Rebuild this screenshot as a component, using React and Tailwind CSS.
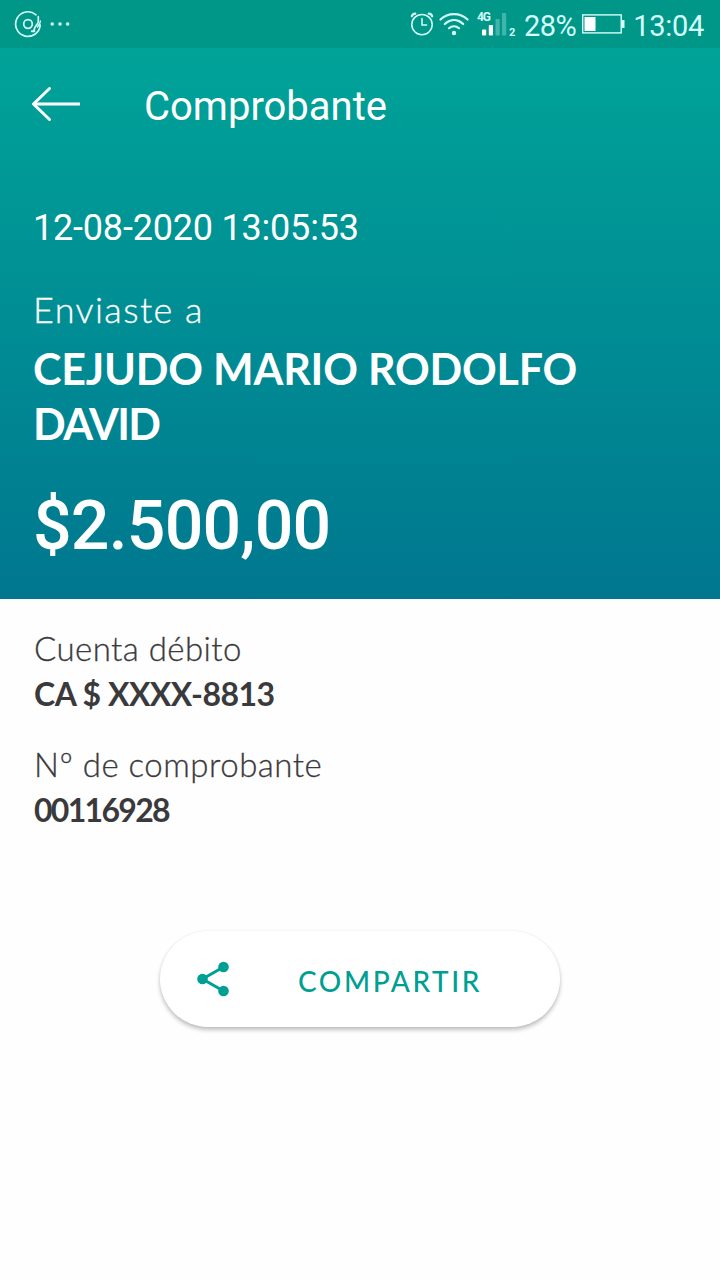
import React from 'react';

const DETAILS = [
  { label: 'Cuenta débito', value: 'CA $ XXXX-8813', labelClass: 'tracking-[0.45px]', valueClass: 'tracking-[-0.5px]' },
  { label: 'Nº de comprobante', value: '00116928', labelClass: 'tracking-[0.5px]', valueClass: 'tracking-[-1.7px]' },
];

function StatusBar() {
  return (
    <div className="flex h-12 items-center justify-between bg-[#009688] text-[#d4fffa]">
      <div className="flex items-center pl-[14px]">
        <svg width="28" height="28" viewBox="0 0 28 28" fill="none" stroke="currentColor" strokeWidth="1.7" strokeLinecap="round">
          <path d="M22 4.8A12.3 12.3 0 1 0 26.2 15" />
          <circle cx="14" cy="14" r="4.3" />
          <path d="M24.3 6.5v5c0 3-4 4-4.500 9.300" />
          <path d="M26.4 11c0 2.500-1.400 4-3 6" strokeWidth="1.3" />
          <path d="M17.8 21.300h2.500" strokeWidth="2" />
        </svg>
        <svg className="ml-2" width="20" height="4" viewBox="0 0 20 4" fill="currentColor">
          <circle cx="2.2" cy="2" r="1.8" />
          <circle cx="10" cy="2" r="1.8" />
          <circle cx="17.7" cy="2" r="1.8" />
        </svg>
      </div>
      <div className="flex items-center pr-4 font-[Roboto,sans-serif] text-[29px] leading-none">
        <svg width="24" height="24" viewBox="0 0 24 24" fill="none" stroke="currentColor" strokeWidth="1.5" strokeLinecap="round">
          <circle cx="12" cy="12.6" r="10.2" />
          <path d="M12 6.5V13h4.600" />
          <path d="M1.800 4.300Q2.500 1.800 5.300 1.600M22.200 4.300Q21.500 1.800 18.700 1.600" strokeWidth="2.2" />
        </svg>
        <svg className="ml-[5px]" width="30" height="24" viewBox="0 0 30 24" fill="none" stroke="currentColor" strokeWidth="2.2" strokeLinecap="round">
          <path d="M1.500 7.500C9 .3 21 .3 28.500 7.500" />
          <path d="M5.800 12C11.500 6.800 18.500 6.800 24.200 12" />
          <path d="M10 16.300c3-2.700 7-2.700 10 0" />
          <circle cx="15" cy="21" r="2.200" fill="currentColor" stroke="none" />
        </svg>
        <svg className="ml-2" width="39" height="26" viewBox="0 0 39 26" fill="currentColor">
          <text x="0" y="10" fontSize="12" fontWeight="700" fontFamily="Roboto, sans-serif" textLength="14">4G</text>
          <rect x="5" y="18.500" width="4.200" height="6" rx=".8" fill="#fff" />
          <rect x="11.800" y="14" width="4.200" height="10.500" rx=".8" fill="#fff" />
          <rect x="18.500" y="8" width="4.200" height="16.500" rx=".8" opacity=".3" />
          <rect x="25" y="2" width="4.200" height="22.500" rx=".8" opacity=".3" />
          <text x="32" y="24.500" fontSize="11" fontWeight="700" fontFamily="Roboto, sans-serif">2</text>
        </svg>
        <span className="ml-[8px] pt-[4px] tracking-[-0.5px]">28%</span>
        <svg className="ml-[6px]" width="43" height="20" viewBox="0 0 43 20" fill="none" stroke="currentColor">
          <rect x=".7" y=".9" width="38.5" height="18" strokeWidth="1.4" />
          <rect x="2.5" y="3" width="11" height="14" fill="#fff" stroke="none" />
          <rect x="39.5" y="6" width="3" height="8" fill="currentColor" stroke="none" />
        </svg>
        <span className="ml-[8px] pt-[4px] tracking-[-0.3px]">13:04</span>
      </div>
    </div>
  );
}

export default function App() {
  return (
    <div className="min-h-[1280px] w-[720px] overflow-hidden bg-[#fefefe] font-[Lato,sans-serif]">
      <StatusBar />

      <header className="h-[551px] bg-linear-to-b from-[#00a398] to-[#00778f] px-[33px] text-white">
        <div className="flex h-28 items-center">
          <svg className="-ml-[2px] shrink-0" width="50" height="36" viewBox="0 0 50 36" fill="none" stroke="currentColor" strokeWidth="3" strokeLinejoin="round">
            <path d="M49 18H3" />
            <path d="M18.500 2.500L2.500 18l16 15.500" strokeLinecap="round" />
          </svg>
          <h1 className="ml-[63px] pt-[6px] font-[Roboto,sans-serif] text-[40px] leading-[48px]">Comprobante</h1>
        </div>
        <p className="mt-[46px] font-[Roboto,sans-serif] text-[36px] leading-[44px] tracking-[-0.2px]">12-08-2020 13:05:53</p>
        <p className="mt-[37px] text-[36px] leading-[44px] font-light tracking-[1.4px] [-webkit-text-stroke:0.3px]">Enviaste a</p>
        <p className="mt-[10px] text-[43px] leading-[55px] font-bold tracking-[-0.2px]">
          CEJUDO MARIO RODOLFO
          <br />
          <span className="tracking-[-1.6px]">DAVID</span>
        </p>
        <p className="mt-[35px] font-[Roboto,sans-serif] text-[68px] leading-[80px] font-medium tracking-[-0.8px]">$2.500,00</p>
      </header>

      <dl className="flex flex-col gap-[26px] px-[34px] pt-[27px] text-[#3a3a3c]">
        {DETAILS.map((item) => (
          <div key={item.label}>
            <dt className={`text-[33px] leading-[45px] font-light [-webkit-text-stroke:0.3px] ${item.labelClass}`}>{item.label}</dt>
            <dd className={`text-[32px] leading-[45px] font-bold ${item.valueClass}`}>{item.value}</dd>
          </div>
        ))}
      </dl>

      <button className="mx-auto mt-[99px] flex h-24 w-[400px] items-center rounded-full bg-white pl-[36px] text-[#009f94] shadow-[0_3px_4px_rgba(0,0,0,0.24),0_0_3px_rgba(0,0,0,0.06)]">
        <svg width="34" height="36" viewBox="0 0 34 36" fill="currentColor" stroke="currentColor">
          <path d="M27.500 6L6.500 18l21 12" fill="none" strokeWidth="3" />
          <circle cx="27.5" cy="6" r="5.3" stroke="none" />
          <circle cx="6.5" cy="18" r="5.3" stroke="none" />
          <circle cx="27.5" cy="30" r="5.3" stroke="none" />
        </svg>
        <span className="ml-[68px] pt-[3px] text-[28px] font-medium tracking-[2.6px]">COMPARTIR</span>
      </button>
    </div>
  );
}
